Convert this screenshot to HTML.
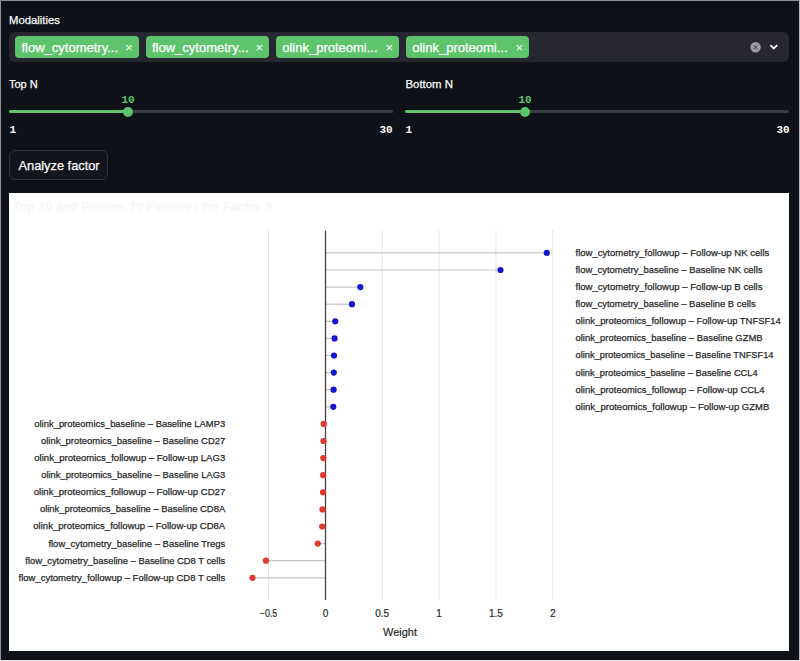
<!DOCTYPE html>
<html><head><meta charset="utf-8">
<style>
html,body{margin:0;padding:0;}
body{width:800px;height:661px;overflow:hidden;background:#0e1117;position:relative;font-family:"Liberation Sans",sans-serif;color:#fafafa;}
.a{position:absolute;}
.lbl{font-size:11px;line-height:12px;white-space:nowrap;-webkit-text-stroke:0.25px #fafafa;}
.ms{left:9px;top:32px;width:780px;height:30px;background:#262730;border-radius:6px;}
.tag{top:36px;height:21.5px;width:123.5px;background:#5dc46c;border-radius:4px;}
.tag span{position:absolute;left:6.5px;top:3.8px;-webkit-text-stroke:0.25px #fff;font-size:13px;line-height:15px;color:#fff;white-space:nowrap;}
.tag i{position:absolute;right:6px;top:4px;font-style:normal;font-size:13px;line-height:15px;color:#fff;}
.mono{font-family:"Liberation Mono",monospace;font-size:11px;line-height:12px;font-weight:bold;}
.trk{height:3px;border-radius:2px;}
.btn{left:8.5px;top:150px;width:99px;height:30px;box-sizing:border-box;border:1px solid #33343c;border-radius:6px;background:#13151c;}
.btn span{position:absolute;left:9px;top:7px;font-size:12.8px;line-height:15px;color:#fafafa;white-space:nowrap;-webkit-text-stroke:0.25px #fafafa;}
svg text{font-family:"Liberation Sans",sans-serif;}
.lab{font-size:9.6px;fill:#2a2a2a;stroke:#2a2a2a;stroke-width:0.25px;}
.tick{font-size:10px;fill:#2a2a2a;stroke:#2a2a2a;stroke-width:0.2px;}
.axt{font-size:11px;fill:#2a2a2a;stroke:#2a2a2a;stroke-width:0.2px;}
.title{font-size:12.5px;font-weight:bold;fill:#f7f7f7;}
</style></head><body>
<div class="a lbl" style="left:9px;top:13.5px;font-size:11.3px;">Modalities</div>
<div class="a ms"></div>
<div class="a tag" style="left:15px"><span>flow_cytometry...</span><i>×</i></div>
<div class="a tag" style="left:145.5px"><span>flow_cytometry...</span><i>×</i></div>
<div class="a tag" style="left:275.7px"><span>olink_proteomi...</span><i>×</i></div>
<div class="a tag" style="left:405.7px"><span>olink_proteomi...</span><i>×</i></div>
<svg class="a" style="left:0;top:0" width="800" height="661">
<circle cx="755.6" cy="47.3" r="5.2" fill="#9c9ca6"/>
<path d="M753.6 45.3 L757.6 49.3 M757.6 45.3 L753.6 49.3" stroke="#30313a" stroke-width="1"/>
<path d="M770.4 45.2 L773.8 48.5 L777.2 45.2" stroke="#fafafa" stroke-width="1.8" fill="none"/>
</svg>
<div class="a lbl" style="left:9px;top:78px;">Top N</div>
<div class="a lbl" style="left:405.5px;top:78px;font-size:11.4px;">Bottom N</div>
<div class="a trk" style="left:9px;top:110.2px;width:383.5px;background:#3b3c44"></div>
<div class="a trk" style="left:9px;top:110.2px;width:119px;background:#5dc46c"></div>
<div class="a" style="left:122.6px;top:106.5px;width:10px;height:10px;border-radius:50%;background:#5dc46c"></div>
<div class="a mono" style="left:121.5px;top:93.5px;color:#5dc46c">10</div>
<div class="a mono" style="left:9.5px;top:123.5px;">1</div>
<div class="a mono" style="left:379.5px;top:123.5px;">30</div>
<div class="a trk" style="left:405.3px;top:110.2px;width:384px;background:#3b3c44"></div>
<div class="a trk" style="left:405.3px;top:110.2px;width:119px;background:#5dc46c"></div>
<div class="a" style="left:519.7px;top:106.5px;width:10px;height:10px;border-radius:50%;background:#5dc46c"></div>
<div class="a mono" style="left:518.5px;top:93.5px;color:#5dc46c">10</div>
<div class="a mono" style="left:405.5px;top:123.5px;">1</div>
<div class="a mono" style="left:776.5px;top:123.5px;">30</div>
<div class="a btn"><span>Analyze factor</span></div>
<div class="a" style="left:8.5px;top:192.7px;width:780.7px;height:458.6px;background:#fff"></div>
<svg class="a" style="left:0;top:0" width="800" height="661">
<line x1="268.5" y1="230.5" x2="268.5" y2="600" stroke="#e6e6e6" stroke-width="1"/>
<line x1="382.2" y1="230.5" x2="382.2" y2="600" stroke="#e6e6e6" stroke-width="1"/>
<line x1="439.0" y1="230.5" x2="439.0" y2="600" stroke="#e6e6e6" stroke-width="1"/>
<line x1="495.9" y1="230.5" x2="495.9" y2="600" stroke="#e6e6e6" stroke-width="1"/>
<line x1="552.7" y1="230.5" x2="552.7" y2="600" stroke="#e6e6e6" stroke-width="1"/>
<line x1="325.5" y1="252.90" x2="546.8" y2="252.90" stroke="#c4c4c4" stroke-width="1.2"/>
<line x1="325.5" y1="270.00" x2="500.5" y2="270.00" stroke="#c4c4c4" stroke-width="1.2"/>
<line x1="325.5" y1="287.10" x2="360.3" y2="287.10" stroke="#c4c4c4" stroke-width="1.2"/>
<line x1="325.5" y1="304.20" x2="352.0" y2="304.20" stroke="#c4c4c4" stroke-width="1.2"/>
<line x1="325.5" y1="321.30" x2="335.3" y2="321.30" stroke="#c4c4c4" stroke-width="1.2"/>
<line x1="325.5" y1="338.40" x2="334.6" y2="338.40" stroke="#c4c4c4" stroke-width="1.2"/>
<line x1="325.5" y1="355.50" x2="334.0" y2="355.50" stroke="#c4c4c4" stroke-width="1.2"/>
<line x1="325.5" y1="372.60" x2="333.8" y2="372.60" stroke="#c4c4c4" stroke-width="1.2"/>
<line x1="325.5" y1="389.70" x2="333.6" y2="389.70" stroke="#c4c4c4" stroke-width="1.2"/>
<line x1="325.5" y1="406.80" x2="333.3" y2="406.80" stroke="#c4c4c4" stroke-width="1.2"/>
<line x1="325.5" y1="423.90" x2="323.7" y2="423.90" stroke="#c4c4c4" stroke-width="1.2"/>
<line x1="325.5" y1="441.00" x2="323.5" y2="441.00" stroke="#c4c4c4" stroke-width="1.2"/>
<line x1="325.5" y1="458.10" x2="323.3" y2="458.10" stroke="#c4c4c4" stroke-width="1.2"/>
<line x1="325.5" y1="475.20" x2="323.1" y2="475.20" stroke="#c4c4c4" stroke-width="1.2"/>
<line x1="325.5" y1="492.30" x2="323.0" y2="492.30" stroke="#c4c4c4" stroke-width="1.2"/>
<line x1="325.5" y1="509.40" x2="322.5" y2="509.40" stroke="#c4c4c4" stroke-width="1.2"/>
<line x1="325.5" y1="526.50" x2="322.2" y2="526.50" stroke="#c4c4c4" stroke-width="1.2"/>
<line x1="325.5" y1="543.60" x2="317.8" y2="543.60" stroke="#c4c4c4" stroke-width="1.2"/>
<line x1="325.5" y1="560.70" x2="265.9" y2="560.70" stroke="#c4c4c4" stroke-width="1.2"/>
<line x1="325.5" y1="577.80" x2="252.5" y2="577.80" stroke="#c4c4c4" stroke-width="1.2"/>
<line x1="325.5" y1="230.5" x2="325.5" y2="600" stroke="#444" stroke-width="1.3"/>
<circle cx="546.8" cy="252.90" r="3.1" fill="#1616cc"/>
<text x="575.5" y="255.80" class="lab" textLength="193.9" lengthAdjust="spacingAndGlyphs">flow_cytometry_followup – Follow-up NK cells</text>
<circle cx="500.5" cy="270.00" r="3.1" fill="#1616cc"/>
<text x="575.5" y="272.90" class="lab" textLength="187" lengthAdjust="spacingAndGlyphs">flow_cytometry_baseline – Baseline NK cells</text>
<circle cx="360.3" cy="287.10" r="3.1" fill="#1616cc"/>
<text x="575.5" y="290.00" class="lab" textLength="187" lengthAdjust="spacingAndGlyphs">flow_cytometry_followup – Follow-up B cells</text>
<circle cx="352.0" cy="304.20" r="3.1" fill="#1616cc"/>
<text x="575.5" y="307.10" class="lab" textLength="180.1" lengthAdjust="spacingAndGlyphs">flow_cytometry_baseline – Baseline B cells</text>
<circle cx="335.3" cy="321.30" r="3.1" fill="#1616cc"/>
<text x="575.5" y="324.20" class="lab" textLength="205.2" lengthAdjust="spacingAndGlyphs">olink_proteomics_followup – Follow-up TNFSF14</text>
<circle cx="334.6" cy="338.40" r="3.1" fill="#1616cc"/>
<text x="575.5" y="341.30" class="lab" textLength="187" lengthAdjust="spacingAndGlyphs">olink_proteomics_baseline – Baseline GZMB</text>
<circle cx="334.0" cy="355.50" r="3.1" fill="#1616cc"/>
<text x="575.5" y="358.40" class="lab" textLength="198" lengthAdjust="spacingAndGlyphs">olink_proteomics_baseline – Baseline TNFSF14</text>
<circle cx="333.8" cy="372.60" r="3.1" fill="#1616cc"/>
<text x="575.5" y="375.50" class="lab" textLength="182.2" lengthAdjust="spacingAndGlyphs">olink_proteomics_baseline – Baseline CCL4</text>
<circle cx="333.6" cy="389.70" r="3.1" fill="#1616cc"/>
<text x="575.5" y="392.60" class="lab" textLength="189.1" lengthAdjust="spacingAndGlyphs">olink_proteomics_followup – Follow-up CCL4</text>
<circle cx="333.3" cy="406.80" r="3.1" fill="#1616cc"/>
<text x="575.5" y="409.70" class="lab" textLength="193.9" lengthAdjust="spacingAndGlyphs">olink_proteomics_followup – Follow-up GZMB</text>
<circle cx="323.7" cy="423.90" r="3.1" fill="#df3a2c"/>
<text x="34.30" y="426.80" class="lab" textLength="190.9" lengthAdjust="spacingAndGlyphs">olink_proteomics_baseline – Baseline LAMP3</text>
<circle cx="323.5" cy="441.00" r="3.1" fill="#df3a2c"/>
<text x="41.00" y="443.90" class="lab" textLength="184.2" lengthAdjust="spacingAndGlyphs">olink_proteomics_baseline – Baseline CD27</text>
<circle cx="323.3" cy="458.10" r="3.1" fill="#df3a2c"/>
<text x="34.30" y="461.00" class="lab" textLength="190.9" lengthAdjust="spacingAndGlyphs">olink_proteomics_followup – Follow-up LAG3</text>
<circle cx="323.1" cy="475.20" r="3.1" fill="#df3a2c"/>
<text x="41.20" y="478.10" class="lab" textLength="184" lengthAdjust="spacingAndGlyphs">olink_proteomics_baseline – Baseline LAG3</text>
<circle cx="323.0" cy="492.30" r="3.1" fill="#df3a2c"/>
<text x="33.80" y="495.20" class="lab" textLength="191.4" lengthAdjust="spacingAndGlyphs">olink_proteomics_followup – Follow-up CD27</text>
<circle cx="322.5" cy="509.40" r="3.1" fill="#df3a2c"/>
<text x="39.90" y="512.30" class="lab" textLength="185.3" lengthAdjust="spacingAndGlyphs">olink_proteomics_baseline – Baseline CD8A</text>
<circle cx="322.2" cy="526.50" r="3.1" fill="#df3a2c"/>
<text x="33.30" y="529.40" class="lab" textLength="191.9" lengthAdjust="spacingAndGlyphs">olink_proteomics_followup – Follow-up CD8A</text>
<circle cx="317.8" cy="543.60" r="3.1" fill="#df3a2c"/>
<text x="48.40" y="546.50" class="lab" textLength="176.8" lengthAdjust="spacingAndGlyphs">flow_cytometry_baseline – Baseline Tregs</text>
<circle cx="265.9" cy="560.70" r="3.1" fill="#df3a2c"/>
<text x="25.30" y="563.60" class="lab" textLength="199.9" lengthAdjust="spacingAndGlyphs">flow_cytometry_baseline – Baseline CD8 T cells</text>
<circle cx="252.5" cy="577.80" r="3.1" fill="#df3a2c"/>
<text x="18.50" y="580.70" class="lab" textLength="206.7" lengthAdjust="spacingAndGlyphs">flow_cytometry_followup – Follow-up CD8 T cells</text>
<text x="268.5" y="616.8" class="tick" text-anchor="middle" textLength="17.5" lengthAdjust="spacingAndGlyphs">−0.5</text>
<text x="325.5" y="616.8" class="tick" text-anchor="middle">0</text>
<text x="382.2" y="616.8" class="tick" text-anchor="middle">0.5</text>
<text x="439.0" y="616.8" class="tick" text-anchor="middle">1</text>
<text x="495.9" y="616.8" class="tick" text-anchor="middle">1.5</text>
<text x="552.7" y="616.8" class="tick" text-anchor="middle">2</text>
<text x="400" y="635.5" class="axt" text-anchor="middle">Weight</text>
<text x="12.5" y="211" class="title" textLength="259.5" lengthAdjust="spacingAndGlyphs">Top 10 and Bottom 10 Features for Factor 3</text>
</svg>
<div class="a" style="left:0;top:0;width:800px;height:1px;background:#8f9095"></div>
<div class="a" style="left:0;top:0;width:1px;height:661px;background:#8f9095"></div>
<div class="a" style="left:799px;top:0;width:1px;height:661px;background:#b8b8bc"></div>
<div class="a" style="left:0;top:660px;width:800px;height:1px;background:#e6e6e8"></div>
</body></html>
